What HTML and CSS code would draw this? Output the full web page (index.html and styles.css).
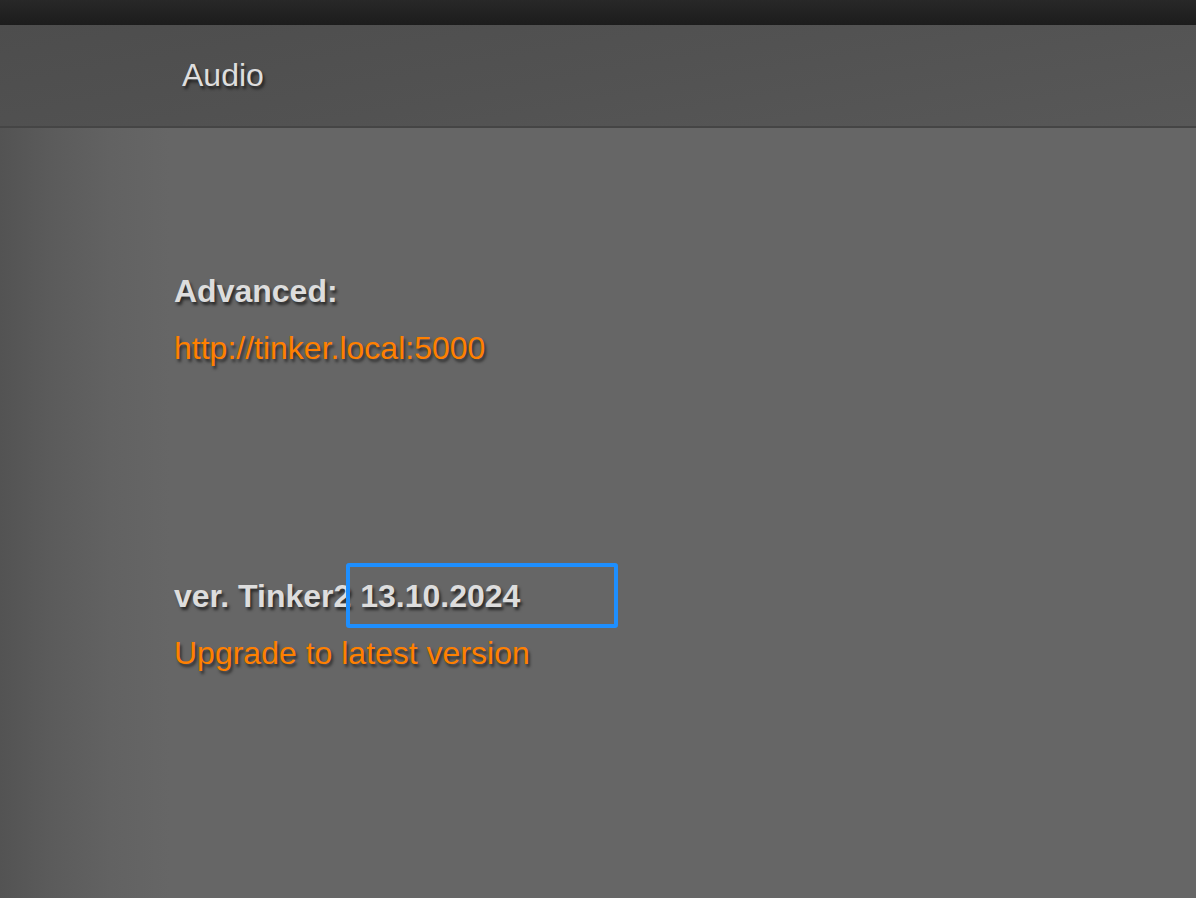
FILE: index.html
```html
<!DOCTYPE html>
<html>
<head>
<meta charset="utf-8">
<link rel="stylesheet" href="styles.css">
</head>
<body>
<div class="topbar"></div>
<header class="header">
  <h1 class="title">Audio</h1>
</header>
<main class="content">
  <section class="block advanced">
    <div class="label">Advanced:</div>
    <a class="link" href="#">http://tinker.local:5000</a>
  </section>
  <section class="block version">
    <div class="label ver">ver. Tinker2 <span class="date">13.10.2024</span><span class="focus"></span></div>
    <a class="link" href="#">Upgrade to latest version</a>
  </section>
</main>
</body>
</html>
```
FILE: styles.css
```css
html, body {
  margin: 0;
  padding: 0;
  height: 100%;
}
body {
  font-family: "Liberation Sans", Arial, sans-serif;
  background: linear-gradient(to right, #535353 0px, #5b5b5b 50px, #626262 110px, #666666 170px, #666666 100%);
  color: #dddddd;
  overflow: hidden;
}
.topbar {
  height: 25px;
  background: linear-gradient(to bottom, #282828, #1c1c1c);
}
.header {
  box-sizing: border-box;
  height: 103px;
  border-bottom: 2px solid #454545;
  background: linear-gradient(170deg, #4d4d4d 0%, #525252 50%, #585858 100%);
  padding-left: 182px;
  padding-top: 32px;
}
.title {
  margin: 0;
  font-weight: normal;
  font-size: 32px;
  line-height: 37px;
  color: #dedede;
  text-shadow: 2px 3px 3px rgba(0,0,0,0.6);
}
.content {
  padding-left: 174px;
  padding-top: 145px;
}
.block {
  display: flex;
  flex-direction: column;
  gap: 20px;
}
.label {
  font-weight: bold;
  font-size: 32px;
  line-height: 37px;
  color: #dddddd;
  text-shadow: 2px 3px 3px rgba(0,0,0,0.6);
}
.link {
  font-size: 32px;
  line-height: 37px;
  color: #ff8000;
  text-decoration: none;
  text-shadow: 2px 3px 3px rgba(0,0,0,0.55);
  align-self: flex-start;
}
.version {
  margin-top: 211px;
}
.ver {
  position: relative;
}
.focus {
  position: absolute;
  left: 172px;
  top: -15px;
  width: 264px;
  height: 57px;
  border: 4px solid #1e8fff;
  border-radius: 3px;
}
```
